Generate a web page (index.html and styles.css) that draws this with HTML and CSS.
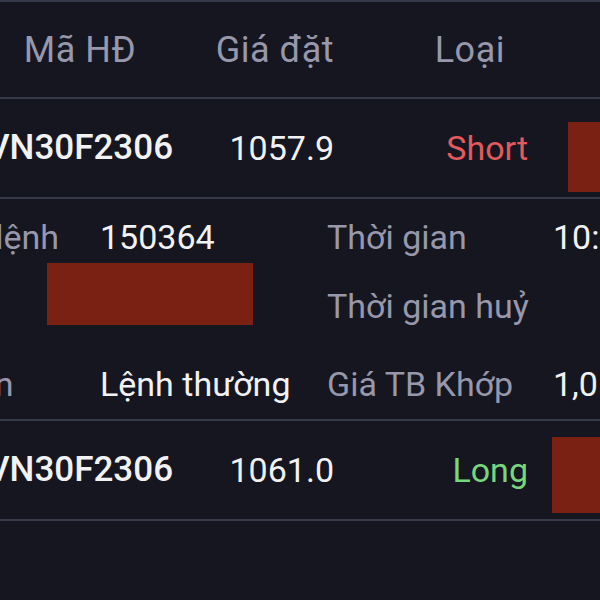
FILE: index.html
```html
<!DOCTYPE html>
<html lang="vi">
<head>
    <meta charset="UTF-8">
    <meta name="viewport" content="width=device-width, initial-scale=1.0">
    <title>Sổ lệnh phái sinh</title>
    <link rel="stylesheet" href="styles.css">
</head>
<body>

    <div class="orders">
        <div class="row head">
            <div class="cell code">Mã HĐ</div>
            <div class="cell price">Giá đặt</div>
            <div class="cell side">Loại</div>
        </div>

        <div class="row">
            <div class="cell code">VN30F2306</div>
            <div class="cell price">1057.9</div>
            <div class="cell side short">Short</div>
            <div class="mask mask-first"></div>
        </div>

        <div class="detail">
            <div class="detail-row first">
                <span class="label">Số hiệu lệnh</span>
                <span class="value">150364</span>
                <span class="label">Thời gian</span>
                <span class="value">10:25:47</span>
            </div>
            <div class="detail-row second">
                <span class="label">Mã TK</span>
                <span class="value"></span>
                <span class="label">Thời gian huỷ</span>
                <span class="value"></span>
            </div>
            <div class="detail-row">
                <span class="label">Điều kiện</span>
                <span class="value">Lệnh thường</span>
                <span class="label">Giá TB Khớp</span>
                <span class="value">1,057.9</span>
            </div>
            <!-- hidden account -->
            <div class="mask mask-account"></div>
        </div>

        <div class="row">
            <div class="cell code">VN30F2306</div>
            <div class="cell price">1061.0</div>
            <div class="cell side long">Long</div>
            <div class="mask mask-second"></div>
        </div>
    </div>

</body>
</html>
```

FILE: styles.css
```css
body {
    font-family: Roboto, "Noto Sans", sans-serif;
    background-color: #161620;
    color: #f2f2f4;
    margin: 0;
    width: 600px;
    height: 600px;
    overflow: hidden;
}
.orders {
    border-top: 2px solid #373a48;
}
.row {
    display: grid;
    grid-template-columns: 200px 154px 214px auto;
    align-items: center;
    height: 98px;
    margin-left: -20px;
    border-bottom: 2px solid #373a48;
    font-size: 34px;
    line-height: 40px;
}
.row.head {
    height: 95px;
    color: #9798ac;
    font-size: 36px;
    letter-spacing: 0.5px;
}
.cell {
    white-space: nowrap;
}
.code {
    text-align: center;
}
.row .code {
    font-size: 35px;
    font-weight: 500;
}
.row.head .code {
    font-size: 36px;
    font-weight: 400;
}
.price {
    text-align: right;
}
.side {
    text-align: right;
    padding-right: 20px;
}
.row.head .side {
    padding-right: 43px;
}
.short {
    color: #e25a5c;
}
.long {
    color: #76d77c;
}
.mask {
    background-color: #7b2113;
}
.mask-first {
    width: 40px;
    height: 70px;
    margin-left: 20px;
    margin-top: 18px;
}
.mask-second {
    width: 50px;
    height: 76px;
    margin-left: 4px;
    margin-top: 10px;
}
.detail {
    position: relative;
    padding: 18px 0 15px;
    border-bottom: 2px solid #373a48;
    font-size: 34px;
    line-height: 40px;
}
.detail-row {
    display: grid;
    grid-template-columns: 225px 227px 226px auto;
    margin-left: -125px;
    white-space: nowrap;
}
.detail-row.first {
    margin-bottom: 29px;
}
.detail-row.second {
    margin-bottom: 38px;
}
.label {
    color: #9798ac;
}
.value {
    color: #f2f2f4;
}
.mask-account {
    position: absolute;
    left: 47px;
    top: 64px;
    width: 206px;
    height: 62px;
}
```
